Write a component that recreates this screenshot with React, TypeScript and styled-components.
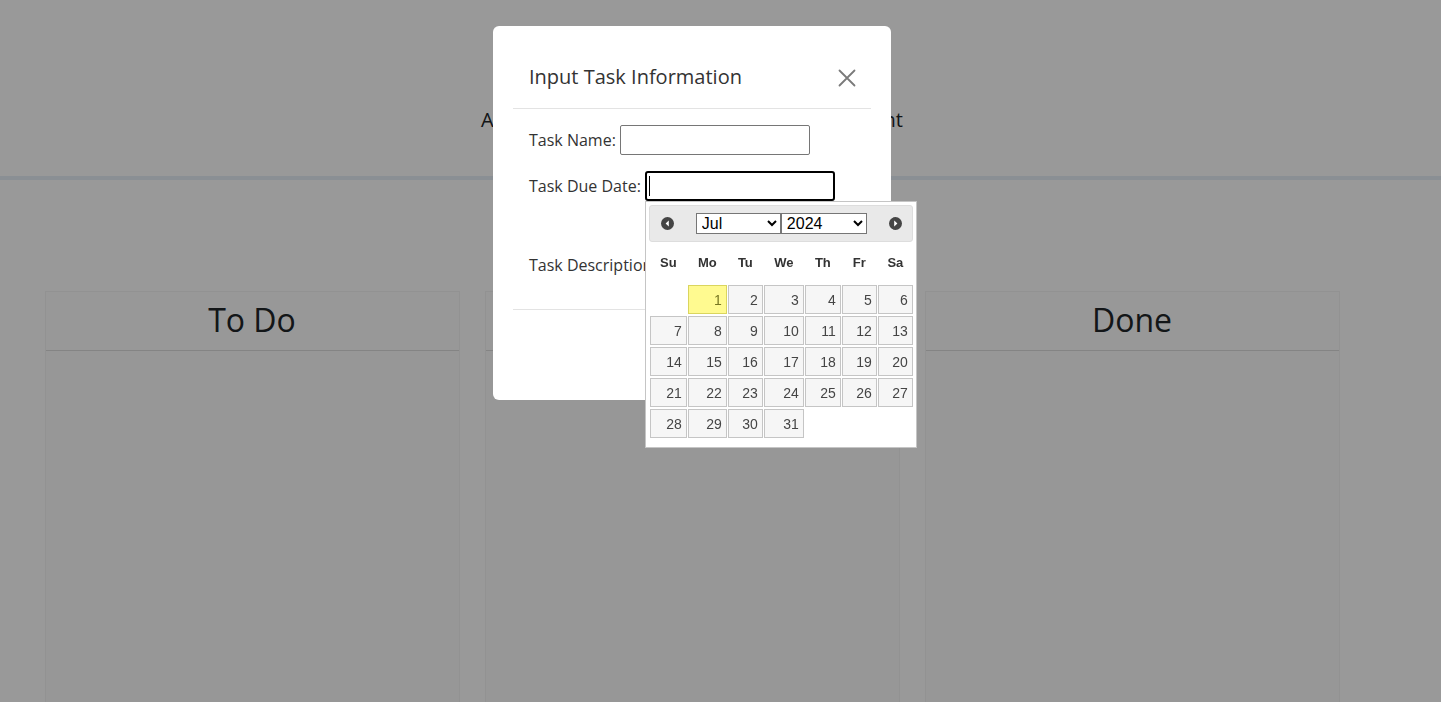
import React from "react";
import styled, { createGlobalStyle } from "styled-components";

const GlobalStyle = createGlobalStyle`
  html, body { margin: 0; padding: 0; background: #fff; }
  body { font-family: "Open Sans", "Noto Sans", sans-serif; color: #212529; }
  * { box-sizing: border-box; }
`;

const Page = styled.div`
  width: 1441px;
  min-height: 702px;
`;

const TopBar = styled.header`
  height: 180px;
  border-bottom: 4px solid #e6eef7;
  display: flex;
  align-items: flex-start;
  padding-top: 105px;
`;

const Tagline = styled.p`
  width: 1384px;
  margin: 0;
  text-align: center;
  font-size: 20px;
  line-height: 30px;
  color: #212529;
`;

const Board = styled.main`
  width: 1384px;
  display: flex;
  justify-content: center;
  gap: 25px;
  padding-top: 111px;
`;

const Column = styled.section`
  width: 415px;
  height: 420px;
  background: #fcfcfc;
  border: 1px solid #f3f3f3;
  display: flex;
  flex-direction: column;
`;

const ColumnHead = styled.h2`
  margin: 0;
  height: 59px;
  padding-bottom: 3px;
  display: flex;
  align-items: center;
  justify-content: center;
  font-size: 32px;
  font-weight: 400;
  color: #212529;
  border-bottom: 1px solid #dcdcdc;
  background: #fdfdfd;
`;

const Backdrop = styled.div`
  position: fixed;
  inset: 0;
  background: rgba(0, 0, 0, 0.4);
`;

const ModalLayer = styled.div`
  position: fixed;
  top: 0;
  left: 0;
  width: 1384px;
  height: 702px;
  display: flex;
  justify-content: center;
  align-items: flex-start;
`;

const ModalBox = styled.div`
  margin-top: 26px;
  width: 398px;
  background: #fff;
  border-radius: 6px;
  padding: 20px 20px 19px;
  display: flex;
  flex-direction: column;
`;

const ModalHeader = styled.div`
  display: flex;
  align-items: center;
  justify-content: space-between;
  padding: 16px;
  border-bottom: 1px solid #e3e3e3;
`;

const ModalTitle = styled.h5`
  margin: 0;
  font-size: 20px;
  font-weight: 400;
  line-height: 30px;
  color: #333;
`;

const CloseButton = styled.button`
  width: 26px;
  height: 26px;
  padding: 4px;
  margin-right: -5px;
  margin-top: 2px;
  border: 0;
  background: transparent;
  display: flex;
  align-items: center;
  justify-content: center;
  cursor: pointer;
`;

const ModalBody = styled.div`
  padding: 16px;
  display: flex;
  flex-direction: column;
  gap: 16px;
`;

const FieldRow = styled.div<{ $end?: boolean }>`
  display: flex;
  align-items: ${(p) => (p.$end ? "flex-end" : "center")};
  gap: 4px;
`;

const Label = styled.label<{ $lift?: number }>`
  font-size: 16px;
  line-height: 24px;
  color: #333;
  margin-bottom: ${(p) => p.$lift ?? 0}px;
`;

const TextInput = styled.input<{ $focused?: boolean }>`
  width: 190px;
  height: 30px;
  padding: 1px 2px;
  font-size: 14px;
  font-family: "Liberation Sans", Arial, sans-serif;
  border: ${(p) => (p.$focused ? "2px solid #000" : "1px solid #767676")};
  border-radius: ${(p) => (p.$focused ? "3px" : "2px")};
  outline: none;
  background: #fff;
`;

const DateWrap = styled.div`
  position: relative;
  width: 190px;
  height: 30px;
`;

const Caret = styled.span`
  position: absolute;
  left: 4px;
  top: 5px;
  width: 1px;
  height: 20px;
  background: #000;
`;

const TextArea = styled.textarea`
  width: 182px;
  height: 76px;
  border: 1px solid #767676;
  border-radius: 2px;
  resize: none;
`;

const ModalFooter = styled.div`
  border-top: 1px solid #e3e3e3;
  height: 72px;
  display: flex;
  align-items: center;
  justify-content: flex-end;
  padding: 12px;
`;

const PrimaryButton = styled.button`
  height: 38px;
  padding: 6px 12px;
  border: 1px solid #0d6efd;
  background: #0d6efd;
  color: #fff;
  font-size: 16px;
  border-radius: 6px;
  font-family: inherit;
`;

/* ---------- Datepicker ---------- */

const Picker = styled.div`
  position: absolute;
  top: 30px;
  left: 0;
  width: 272px;
  padding: 3px 3px 9px;
  background: #fff;
  border: 1px solid #c5c5c5;
  font-family: "Liberation Sans", Arial, Helvetica, sans-serif;
  z-index: 5;
`;

const PickerHead = styled.div`
  height: 37px;
  background: #e9e9e9;
  border: 1px solid #dddddd;
  border-radius: 3px;
  display: grid;
  grid-template-columns: 1fr auto 1fr;
  align-items: center;
`;

const NavIcon = styled.span<{ $side: "left" | "right" }>`
  display: flex;
  justify-self: ${(p) => (p.$side === "left" ? "start" : "end")};
  margin: ${(p) => (p.$side === "left" ? "0 0 0 11px" : "0 10px 0 0")};
`;

const Selects = styled.div`
  display: flex;
  gap: 0;
  margin-left: 1px;
`;

const PickerSelect = styled.select<{ $w: number }>`
  width: ${(p) => p.$w}px;
  height: 21px;
  font-size: 16px;
  font-family: "Liberation Sans", Arial, sans-serif;
  color: #000;
  border: 1px solid #767676;
  border-radius: 0;
  background: #fff;
  padding: 0 0 0 1px;
`;

const COLS = "37px 39px 35px 40px 36px 35px 35px";

const DayHeads = styled.div`
  display: grid;
  grid-template-columns: ${COLS};
  column-gap: 1px;
  height: 38px;
  margin: 1px 0 4px 1px;
  align-items: center;
`;

const DayHead = styled.span`
  text-align: center;
  font-size: 13px;
  font-weight: 700;
  color: #333;
`;

const DayGrid = styled.div`
  display: grid;
  grid-template-columns: ${COLS};
  grid-auto-rows: 29px;
  column-gap: 1px;
  row-gap: 2px;
  margin-left: 1px;
`;

const DayCell = styled.a<{ $today?: boolean }>`
  display: flex;
  align-items: center;
  justify-content: flex-end;
  padding-right: 4px;
  font-size: 14px;
  color: ${(p) => (p.$today ? "#777620" : "#454545")};
  background: ${(p) => (p.$today ? "#fffa90" : "#f6f6f6")};
  border: 1px solid ${(p) => (p.$today ? "#dad55e" : "#c5c5c5")};
  text-decoration: none;
`;

const Blank = styled.span``;

const CircleArrow = ({ dir }: { dir: "left" | "right" }) => (
  <svg width="13" height="13" viewBox="0 0 13 13">
    <circle cx="6.5" cy="6.5" r="6.5" fill="#454545" />
    {dir === "left" ? (
      <path d="M7.8 3.6 L4.6 6.5 L7.8 9.4 Z" fill="#fff" />
    ) : (
      <path d="M5.2 3.6 L8.4 6.5 L5.2 9.4 Z" fill="#fff" />
    )}
  </svg>
);

const CloseIcon = () => (
  <svg width="18" height="18" viewBox="0 0 18 18">
    <path d="M1.5 1.5 L16.5 16.5 M16.5 1.5 L1.5 16.5" stroke="#7a7a7a" strokeWidth="1.8" strokeLinecap="round" />
  </svg>
);

const months = ["Jan", "Feb", "Mar", "Apr", "May", "Jun", "Jul", "Aug", "Sep", "Oct", "Nov", "Dec"];
const years = Array.from({ length: 21 }, (_, i) => 2014 + i);
const weekDays = ["Su", "Mo", "Tu", "We", "Th", "Fr", "Sa"];

const DatePicker = () => {
  const cells: (number | null)[] = [null];
  for (let d = 1; d <= 31; d++) cells.push(d);
  return (
    <Picker>
      <PickerHead>
        <NavIcon $side="left"><CircleArrow dir="left" /></NavIcon>
        <Selects>
          <PickerSelect $w={85} defaultValue="Jul">
            {months.map((m) => (
              <option key={m} value={m}>{m}</option>
            ))}
          </PickerSelect>
          <PickerSelect $w={86} defaultValue="2024">
            {years.map((y) => (
              <option key={y} value={String(y)}>{y}</option>
            ))}
          </PickerSelect>
        </Selects>
        <NavIcon $side="right"><CircleArrow dir="right" /></NavIcon>
      </PickerHead>
      <DayHeads>
        {weekDays.map((w) => (
          <DayHead key={w}>{w}</DayHead>
        ))}
      </DayHeads>
      <DayGrid>
        {cells.map((d, i) =>
          d === null ? (
            <Blank key={`b${i}`} />
          ) : (
            <DayCell key={d} href="#" $today={d === 1}>
              {d}
            </DayCell>
          )
        )}
      </DayGrid>
    </Picker>
  );
};

export default function App() {
  return (
    <>
      <GlobalStyle />
      <Page>
        <TopBar>
          <Tagline>A simple Kanban board for task management</Tagline>
        </TopBar>
        <Board>
          <Column><ColumnHead>To Do</ColumnHead></Column>
          <Column><ColumnHead>In Progress</ColumnHead></Column>
          <Column><ColumnHead>Done</ColumnHead></Column>
        </Board>
      </Page>
      <Backdrop />
      <ModalLayer>
        <ModalBox>
          <ModalHeader>
            <ModalTitle>Input Task Information</ModalTitle>
            <CloseButton aria-label="Close"><CloseIcon /></CloseButton>
          </ModalHeader>
          <ModalBody>
            <FieldRow>
              <Label>Task Name:</Label>
              <TextInput type="text" />
            </FieldRow>
            <FieldRow>
              <Label>Task Due Date:</Label>
              <DateWrap>
                <TextInput type="text" $focused />
                <Caret />
                <DatePicker />
              </DateWrap>
            </FieldRow>
            <FieldRow $end>
              <Label $lift={16}>Task Description:</Label>
              <TextArea />
            </FieldRow>
          </ModalBody>
          <ModalFooter>
            <PrimaryButton>Save Task</PrimaryButton>
          </ModalFooter>
        </ModalBox>
      </ModalLayer>
    </>
  );
}
